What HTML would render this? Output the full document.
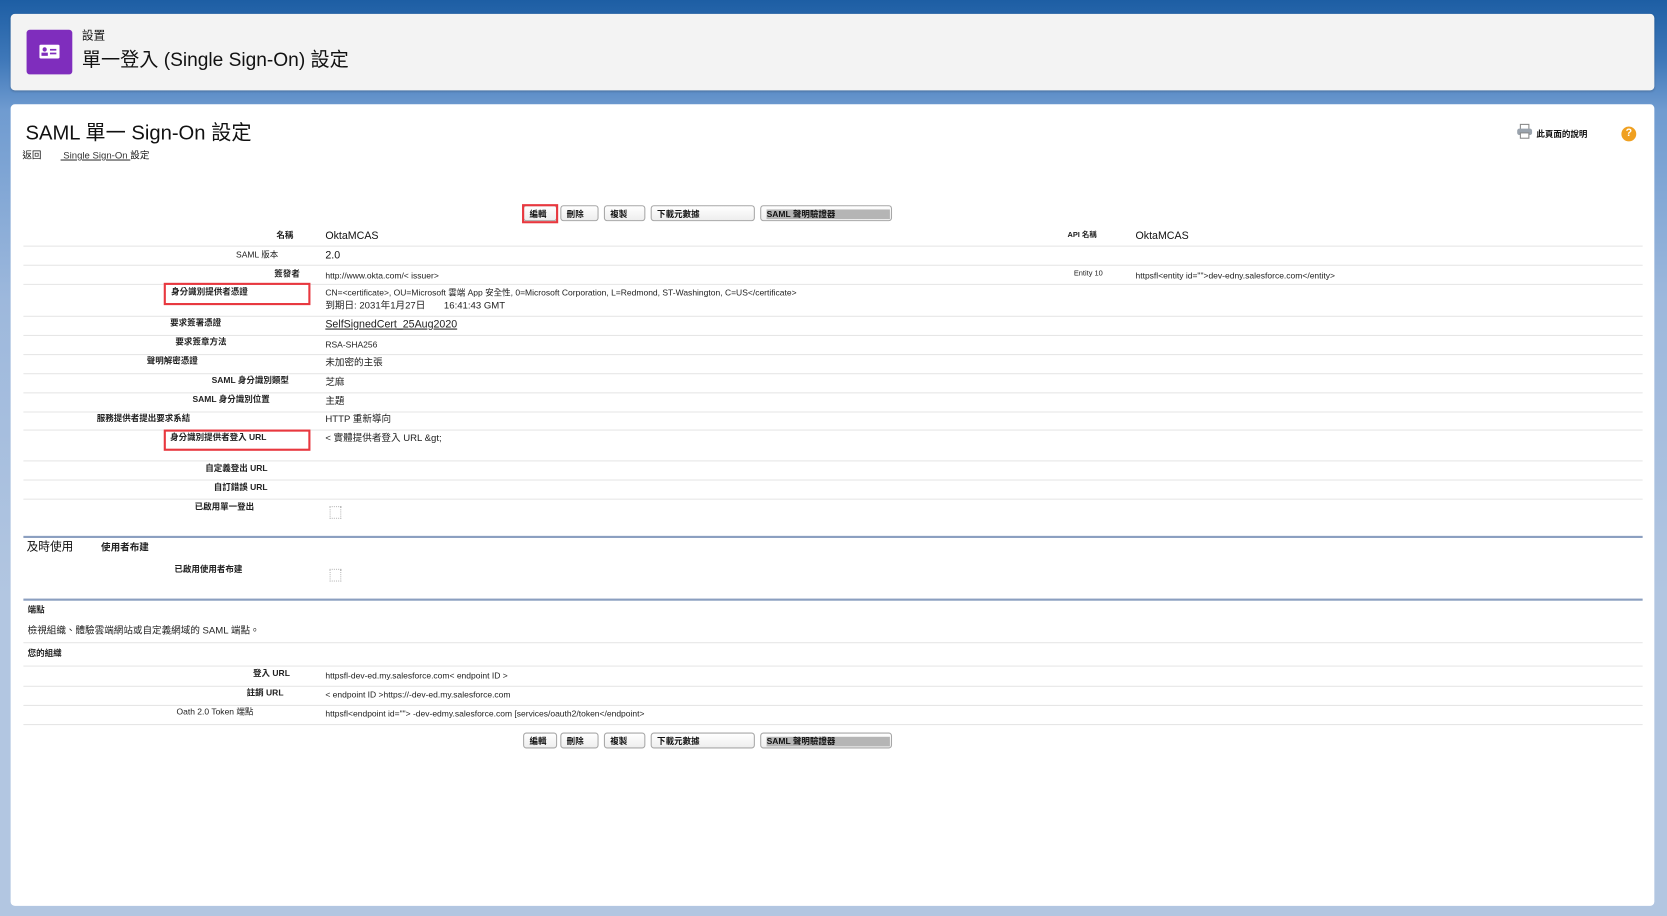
<!DOCTYPE html>
<html><head><meta charset="utf-8">
<style>
html,body{margin:0;padding:0;width:1667px;height:916px;overflow:hidden;background:#b2c6e1}
#bg{position:absolute;left:0;top:0;width:1667px;height:916px;background:linear-gradient(180deg,#1d5ea4 0px,#3f78b9 60px,#6f9bd0 110px,#9db8dc 300px,#b2c6e1 600px)}
#s{position:absolute;left:0;top:0;width:1568px;height:862px;transform:scale(1.0632);transform-origin:0 0;font-family:"Liberation Sans","Noto Sans CJK TC",sans-serif;color:#111}
.a{position:absolute;white-space:nowrap;line-height:1}
.hdr{position:absolute;left:10px;top:13px;width:1546px;height:72px;background:#f3f3f3;border-radius:4px;box-shadow:0 1px 2px rgba(0,0,0,.2)}
.card{position:absolute;left:10px;top:98px;width:1546px;height:754px;background:#fff;border-radius:4px}
.l{font-size:8px;font-weight:bold;color:#222}
.v{font-size:9px;color:#222}
.ln{position:absolute;left:22px;width:1523px;height:1px;background:#e6e6e6}
.sec{position:absolute;left:22px;width:1523px;height:2px;background:#8b9fc0}
.btn{position:absolute;height:15px;border:1px solid #a7a7a7;border-radius:3px;background:linear-gradient(#fff,#eee);font-size:8px;font-weight:bold;line-height:15px;padding-left:5px;box-sizing:border-box}
.red{position:absolute;border:2px solid #e8383f;box-sizing:border-box}
.cb{position:absolute;width:9px;height:10px;border:1px dotted #bbb}
</style></head><body>
<div id="bg"></div>
<div id="s">
<div class="hdr"></div>
<div class="a" style="left:25px;top:28px;width:43px;height:42px;background:#7f2dbd;border-radius:3px"></div>
<svg class="a" style="left:37px;top:42px" width="19" height="13" viewBox="0 0 19 13"><rect x="0" y="0" width="19" height="13" rx="1.5" fill="#fff"/><circle cx="5" cy="4.5" r="2" fill="#7f2dbd"/><rect x="2" y="7.5" width="6" height="3" fill="#7f2dbd"/><rect x="10" y="4" width="6" height="1.6" fill="#7f2dbd"/><rect x="10" y="7.5" width="6" height="1.6" fill="#7f2dbd"/></svg>
<div class="a" style="left:77px;top:29px;font-size:11px">設置</div>
<div class="a" style="left:77px;top:47px;font-size:18px">單一登入 (Single Sign-On) 設定</div>

<div class="card"></div>
<div class="a" style="left:24px;top:116px;font-size:19px">SAML 單一 Sign-On 設定</div>
<div class="a" style="left:21px;top:142px;font-size:9px">返回</div>
<div class="a" style="left:57px;top:142px;font-size:9px"><span style="text-decoration:underline;color:#333">&nbsp;Single Sign-On </span>設定</div>
<svg class="a" style="left:1426px;top:116px" width="16" height="15" viewBox="0 0 16 15"><rect x="4" y="1" width="8" height="5" fill="#fff" stroke="#888"/><rect x="1" y="5" width="14" height="6" rx="2" fill="#9aa3ad"/><rect x="4" y="9" width="8" height="5" fill="#fff" stroke="#888"/></svg>
<div class="a" style="left:1445px;top:123px;font-size:8px;font-weight:bold">此頁面的說明</div>
<div class="a" style="left:1525px;top:119px;width:14px;height:14px;border-radius:50%;background:#f0a020;color:#fff;font-size:10px;font-weight:bold;text-align:center;line-height:14px">?</div>

<div class="btn" style="left:492px;top:193px;width:32px">編輯</div>
<div class="red" style="left:491px;top:192px;width:34px;height:18px"></div>
<div class="btn" style="left:527px;top:193px;width:36px">刪除</div>
<div class="btn" style="left:568px;top:193px;width:39px">複製</div>
<div class="btn" style="left:612px;top:193px;width:98px">下載元數據</div>
<div class="btn" style="left:715px;top:193px;width:124px"><span style="display:inline-block;width:116px;height:9px;line-height:9px;background:#b5b5b5;vertical-align:middle">SAML 聲明驗證器</span></div>

<div class="a l" style="left:260px;top:218px">名稱</div>
<div class="a" style="left:306px;top:218px;font-size:10px">OktaMCAS</div>
<div class="a l" style="left:1004px;top:218px;font-size:7px">API 名稱</div>
<div class="a" style="left:1068px;top:218px;font-size:10px">OktaMCAS</div>
<div class="ln" style="top:231px"></div>
<div class="a l" style="left:222px;top:236px;font-weight:normal">SAML 版本</div>
<div class="a" style="left:306px;top:236px;font-size:10px">2.0</div>
<div class="ln" style="top:249px"></div>
<div class="a l" style="left:258px;top:254px">簽發者</div>
<div class="a v" style="left:306px;top:256px;font-size:8px">http://www.okta.com/&lt; issuer&gt;</div>
<div class="a l" style="left:1010px;top:254px;font-size:7px;font-weight:normal">Entity 10</div>
<div class="a v" style="left:1068px;top:256px;font-size:8px">httpsfl&lt;entity id=""&gt;dev-edny.salesforce.com&lt;/entity&gt;</div>
<div class="ln" style="top:267px"></div>
<div class="a l" style="left:161px;top:271px">身分識別提供者憑證</div>
<div class="red" style="left:154px;top:266px;width:138px;height:21px"></div>
<div class="a v" style="left:306px;top:272px;font-size:8px">CN=&lt;certificate&gt;, OU=Microsoft 雲端 App 安全性, 0=Microsoft Corporation, L=Redmond, ST-Washington, C=US&lt;/certificate&gt;</div>
<div class="a v" style="left:306px;top:283px">到期日: 2031年1月27日 &nbsp; &nbsp; &nbsp; 16:41:43 GMT</div>
<div class="ln" style="top:297px"></div>
<div class="a l" style="left:160px;top:300px">要求簽署憑證</div>
<div class="a v" style="left:306px;top:301px;font-size:10px;text-decoration:underline">SelfSignedCert_25Aug2020</div>
<div class="ln" style="top:315px"></div>
<div class="a l" style="left:165px;top:318px">要求簽章方法</div>
<div class="a v" style="left:306px;top:321px;font-size:8px">RSA-SHA256</div>
<div class="ln" style="top:333px"></div>
<div class="a l" style="left:138px;top:336px">聲明解密憑證</div>
<div class="a v" style="left:306px;top:337px">未加密的主張</div>
<div class="ln" style="top:351px"></div>
<div class="a l" style="left:199px;top:354px">SAML 身分識別類型</div>
<div class="a v" style="left:306px;top:355px">芝麻</div>
<div class="ln" style="top:369px"></div>
<div class="a l" style="left:181px;top:372px">SAML 身分識別位置</div>
<div class="a v" style="left:306px;top:373px">主題</div>
<div class="ln" style="top:387px"></div>
<div class="a l" style="left:91px;top:390px">服務提供者提出要求系結</div>
<div class="a v" style="left:306px;top:390px">HTTP 重新導向</div>
<div class="ln" style="top:404px"></div>
<div class="a l" style="left:160px;top:408px">身分識別提供者登入 URL</div>
<div class="red" style="left:154px;top:404px;width:138px;height:20px"></div>
<div class="a v" style="left:306px;top:408px">&lt; 實體提供者登入 URL &amp;gt;</div>
<div class="ln" style="top:433px"></div>
<div class="a l" style="left:193px;top:437px">自定義登出 URL</div>
<div class="ln" style="top:451px"></div>
<div class="a l" style="left:201px;top:455px">自訂錯誤 URL</div>
<div class="ln" style="top:469px"></div>
<div class="a l" style="left:183px;top:473px">已啟用單一登出</div>
<div class="cb" style="left:310px;top:476px"></div>

<div class="sec" style="top:504px"></div>
<div class="a" style="left:25px;top:510px;font-size:11px">及時使用</div>
<div class="a l" style="left:95px;top:511px;font-size:9px">使用者布建</div>
<div class="a l" style="left:164px;top:532px">已啟用使用者布建</div>
<div class="cb" style="left:310px;top:535px"></div>

<div class="sec" style="top:563px"></div>
<div class="a l" style="left:26px;top:570px">端點</div>
<div class="a v" style="left:26px;top:589px">檢視組織、體驗雲端網站或自定義網域的 SAML 端點。</div>
<div class="ln" style="top:604px"></div>
<div class="a l" style="left:26px;top:611px">您的組織</div>
<div class="ln" style="top:626px"></div>
<div class="a l" style="left:238px;top:630px">登入 URL</div>
<div class="a v" style="left:306px;top:632px;font-size:8px">httpsfl-dev-ed.my.salesforce.com&lt; endpoint ID &gt;</div>
<div class="ln" style="top:645px"></div>
<div class="a l" style="left:232px;top:648px">註銷 URL</div>
<div class="a v" style="left:306px;top:650px;font-size:8px">&lt; endpoint ID &gt;https://-dev-ed.my.salesforce.com</div>
<div class="ln" style="top:663px"></div>
<div class="a l" style="left:166px;top:666px;font-weight:normal">Oath 2.0 Token 端點</div>
<div class="a v" style="left:306px;top:668px;font-size:8px">httpsfl&lt;endpoint id=""&gt; -dev-edmy.salesforce.com [services/oauth2/token&lt;/endpoint&gt;</div>
<div class="ln" style="top:681px"></div>

<div class="btn" style="left:492px;top:689px;width:32px">編輯</div>
<div class="btn" style="left:527px;top:689px;width:36px">刪除</div>
<div class="btn" style="left:568px;top:689px;width:39px">複製</div>
<div class="btn" style="left:612px;top:689px;width:98px">下載元數據</div>
<div class="btn" style="left:715px;top:689px;width:124px"><span style="display:inline-block;width:116px;height:9px;line-height:9px;background:#b5b5b5;vertical-align:middle">SAML 聲明驗證器</span></div>
</div>
</body></html>
